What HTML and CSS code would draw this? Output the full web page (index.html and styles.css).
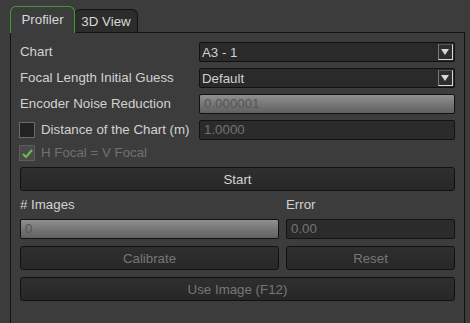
FILE: index.html
```html
<!DOCTYPE html>
<html>
<head>
<meta charset="utf-8">
<link rel="stylesheet" href="styles.css">
</head>
<body>
<div class="tabs">
  <div class="tab active">Profiler</div>
  <div class="tab">3D View</div>
</div>
<div class="panel">
  <div class="form">
    <div class="label">Chart</div>
    <div class="combo"><span>A3 - 1</span><span class="arrow"></span></div>
    <div class="label">Focal Length Initial Guess</div>
    <div class="combo"><span>Default</span><span class="arrow"></span></div>
    <div class="label">Encoder Noise Reduction</div>
    <div class="field grad">0.000001</div>
    <div class="label check-label"><span class="box"></span>Distance of the Chart (m)</div>
    <div class="field dark">1.0000</div>
    <div class="label check-label disabled short"><span class="box checked"><svg width="13" height="13" viewBox="0 0 13 13"><path d="M2 7 L5 10 L11 3" fill="none" stroke="#6cc04a" stroke-width="2"/></svg></span>H Focal = V Focal</div>
  </div>
  <div class="btn start">Start</div>
  <div class="two">
    <div class="label">&#35; Images</div>
    <div class="label">Error</div>
    <div class="field grad">0</div>
    <div class="field dark">0.00</div>
    <div class="btn off">Calibrate</div>
    <div class="btn off">Reset</div>
  </div>
  <div class="btn wide off">Use Image (F12)</div>
</div>
</body>
</html>
```
FILE: styles.css
```css
html, body {
  margin: 0;
  height: 100%;
  overflow: hidden;
}
body {
  background: #3c3c3c;
  font-family: "Liberation Sans", Arial, sans-serif;
  font-size: 13.3px;
  color: #d2d2d2;
}
.tabs {
  display: flex;
  align-items: flex-end;
  padding: 6px 0 0 10px;
  height: 26px;
  position: relative;
  z-index: 1;
}
.tab {
  box-sizing: border-box;
  height: 23px;
  width: 64px;
  margin-left: -1px;
  background: #2c2c2c;
  border: 1px solid #141414;
  border-bottom: none;
  border-radius: 6px 6px 0 0;
  display: flex;
  align-items: center;
  justify-content: center;
  color: #d8d8d8;
  padding-top: 1px;
}
.tab.active {
  margin-left: 0;
  height: 27px;
  width: 65px;
  background: #3c3c3c;
  border-color: #3f9a34;
  margin-bottom: -1px;
  padding-top: 0;
  padding-bottom: 2px;
  position: relative;
  z-index: 2;
}
.panel {
  box-sizing: border-box;
  margin: 0 5px 0 10px;
  border: 1px solid #121212;
  height: 300px;
  padding: 9px 9px 0 9px;
}
.form {
  display: grid;
  grid-template-columns: 179px 1fr;
  row-gap: 6px;
  align-items: center;
}
.label {
  color: #d2d2d2;
  line-height: 20px;
}
.combo {
  box-sizing: border-box;
  height: 20px;
  background: #2a2a2a;
  border: 1px solid #111;
  border-radius: 2px;
  display: flex;
  align-items: center;
  justify-content: space-between;
  padding-left: 2px;
  padding-right: 1px;
  color: #d0d0d0;
}
.arrow {
  box-sizing: border-box;
  width: 15px;
  height: 16px;
  border: 1px solid #d8d8d8;
  border-top-color: #555;
  border-left-color: #777;
  background: #2e2e2e;
  position: relative;
}
.arrow::after {
  content: "";
  position: absolute;
  left: 2px;
  top: 4px;
  border-left: 4.5px solid transparent;
  border-right: 4.5px solid transparent;
  border-top: 6px solid #d8d8d8;
}
.field {
  box-sizing: border-box;
  height: 20px;
  border: 1px solid #121212;
  border-radius: 2px;
  padding-left: 4px;
  line-height: 18px;
  color: #6c6c6c;
}
.field.grad {
  background: linear-gradient(#909090, #727272 60%, #616161);
  color: #555;
}
.field.dark {
  background: #2b2b2b;
  color: #727272;
}
.check-label {
  display: flex;
  align-items: center;
  margin-left: -1px;
  white-space: nowrap;
}
.check-label.short {
  line-height: 16px;
  margin-top: -1px;
}
.box {
  box-sizing: border-box;
  width: 16px;
  height: 16px;
  background: #222;
  border: 1px solid #6a6a6a;
  margin-right: 6px;
  display: flex;
  align-items: center;
  justify-content: center;
}
.box.checked {
  background: #4a4a4a;
  border-color: #5c5c5c;
}
.disabled {
  color: #717171;
}
.btn {
  box-sizing: border-box;
  height: 24px;
  background: linear-gradient(#2f2f2f, #272727);
  border: 1px solid #111;
  border-radius: 3px;
  display: flex;
  align-items: center;
  justify-content: center;
  color: #d4d4d4;
}
.btn.off {
  color: #777;
}
.start {
  margin-top: 6px;
}
.wide {
  margin-top: 7px;
}
.two {
  display: grid;
  grid-template-columns: 259px 1fr;
  column-gap: 7px;
  row-gap: 7px;
  margin-top: 4px;
  align-items: center;
}
.two .label {
  line-height: 20px;
  margin-bottom: -3px;
}
```
